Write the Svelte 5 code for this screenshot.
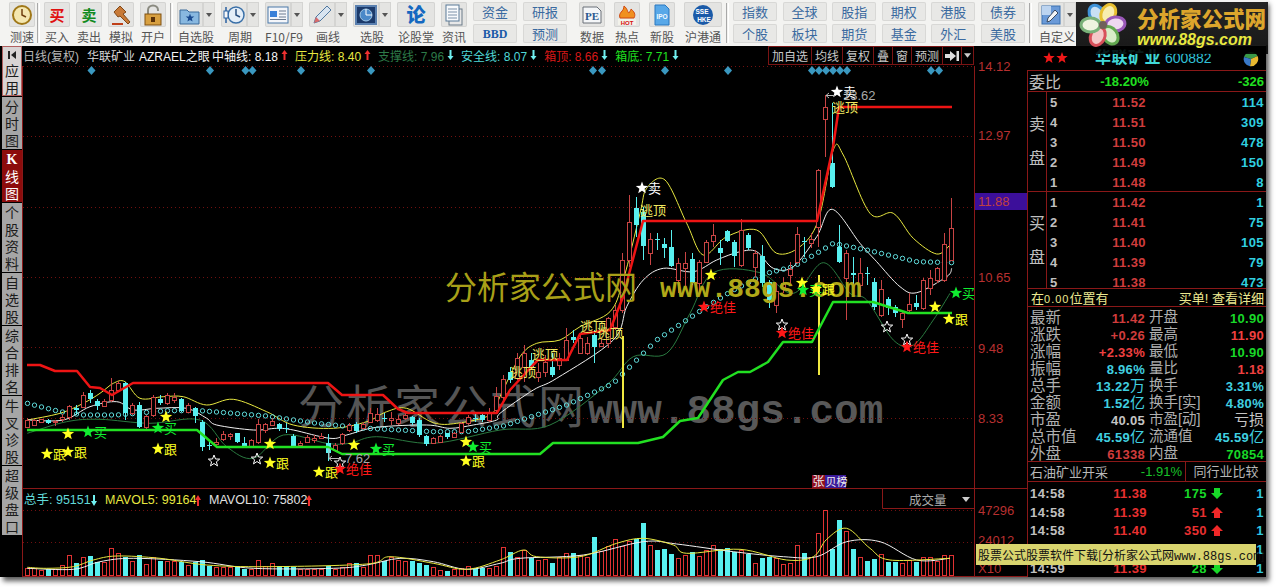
<script>
// coordinates below were read off crops at 3x, z() maps them back to page pixels
const z = (ox, oy, pts) => pts.map(([x, y]) => [ox + x / 3, oy + y / 3]);
const path = (pts) => pts.map((p) => p[0].toFixed(1) + ',' + p[1].toFixed(1)).join(' ');

// catmull-rom through the read points, the indicator lines are curves in the reference
const curve = (pts) => {
	let d = `M${pts[0][0].toFixed(1)} ${pts[0][1].toFixed(1)}`;
	for (let i = 0; i < pts.length - 1; i++) {
		const p0 = pts[i - 1] || pts[i];
		const p1 = pts[i];
		const p2 = pts[i + 1];
		const p3 = pts[i + 2] || p2;
		const c1 = [p1[0] + (p2[0] - p0[0]) / 6, p1[1] + (p2[1] - p0[1]) / 6];
		const c2 = [p2[0] - (p3[0] - p1[0]) / 6, p2[1] - (p3[1] - p1[1]) / 6];
		d += ` C${c1[0].toFixed(1)} ${c1[1].toFixed(1)} ${c2[0].toFixed(1)} ${c2[1].toFixed(1)} ${p2[0].toFixed(1)} ${p2[1].toFixed(1)}`;
	}
	return d;
};

const redLine = [[27, 365], [40, 365], [55, 371], [77, 371], [90, 387], [100, 388], [112, 395], [133, 383], [328, 383], [342, 395], [383, 395], [398, 409], [408, 413], [497, 413], [510, 390], [533, 365], [538, 360], [567, 360], [580, 334], [610, 330], [623, 297], [643, 221], [817, 221], [833, 147], [839, 107], [952, 107]];
const greenLine = [[27, 430], [197, 430], [217, 447], [328, 447], [342, 454], [540, 454], [553, 443], [638, 443], [663, 437], [680, 421], [698, 418], [723, 380], [738, 372], [750, 372], [768, 362], [783, 342], [812, 342], [833, 302], [873, 302], [908, 313], [952, 313]];
const whiteLine = [
	...z(0, 340, [[82, 240], [190, 240], [270, 200], [350, 185], [400, 210], [470, 205], [560, 205], [620, 235], [650, 255], [760, 270], [830, 265], [880, 270], [990, 295], [1040, 285], [1130, 262], [1280, 255], [1350, 265], [1420, 255], [1490, 240]]),
	...z(500, 340, [[0, 220], [100, 150], [170, 115], [340, 0]]),
	...z(500, 80, [[380, 680], [430, 600], [490, 565], [580, 575], [650, 540], [720, 515], [770, 515], [820, 565], [880, 560], [950, 470], [997, 388], [1080, 490], [1130, 545], [1200, 620], [1250, 638], [1340, 590], [1355, 565]])
];
const yellowLine = [
	...z(0, 340, [[82, 240], [180, 220], [250, 190], [300, 160], [340, 130], [375, 125], [420, 175], [490, 170], [550, 170], [620, 195], [700, 178], [800, 215], [880, 255], [1000, 265], [1100, 245], [1160, 215], [1220, 205], [1300, 248], [1370, 250], [1470, 225]]),
	...z(500, 340, [[0, 170], [60, 50], [110, 10]]),
	...z(500, 80, [[180, 780], [240, 740], [330, 695], [370, 600], [420, 400], [440, 325], [495, 300], [560, 430], [610, 525], [680, 470], [770, 450], [830, 520], [900, 500], [955, 420], [1000, 210], [1030, 225], [1110, 400], [1180, 400], [1240, 475], [1310, 522], [1350, 495]])
];
const darkLine = [
	...z(0, 340, [[82, 280], [200, 245], [300, 238], [450, 250], [600, 240], [680, 320], [760, 355], [850, 285], [980, 310], [1050, 310], [1130, 290], [1300, 310]]),
	...z(500, 340, [[0, 270], [150, 255], [320, 135], [400, 50]]),
	...z(500, 80, [[500, 820], [570, 700], [640, 578], [780, 578], [880, 640], [970, 548], [1050, 640], [1100, 660], [1180, 780], [1240, 795], [1300, 720], [1350, 640]])
];
const dotLine = [
	...z(0, 340, [[82, 190], [180, 215], [250, 225], [350, 225], [500, 212], [600, 212], [800, 228], [950, 250], [1100, 265], [1300, 275], [1400, 275]]),
	...z(500, 340, [[10, 258], [200, 195], [340, 130]]),
	...z(500, 80, [[470, 780], [620, 680], [700, 630], [800, 580], [880, 560], [950, 520], [1000, 490], [1100, 510], [1250, 545], [1355, 548]])
];
const volWhite = [
	...z(0, 340, [[82, 685], [220, 688], [300, 665], [400, 655], [600, 665], [760, 685], [1000, 685], [1100, 675], [1200, 655], [1300, 665], [1400, 688]]),
	...z(500, 340, [[0, 670], [60, 655], [250, 645], [430, 605], [530, 612], [700, 635], [850, 650], [950, 650], [1040, 605], [1140, 605], [1250, 660], [1350, 655]])
];
const volYellow = [
	...z(0, 340, [[82, 682], [140, 685], [220, 680], [280, 660], [350, 648], [480, 655], [620, 675], [800, 680], [1100, 672], [1170, 650], [1300, 670], [1400, 688]]),
	...z(500, 340, [[0, 660], [70, 630], [110, 650], [240, 650], [350, 610], [430, 595], [520, 615], [560, 640], [720, 628], [860, 660], [940, 650], [980, 598], [1040, 565], [1110, 625], [1170, 660], [1350, 655]])
];

const lerpY = (pts, x) => {
	for (let i = 1; i < pts.length; i++) {
		if (x <= pts[i][0]) {
			const [a, b] = [pts[i - 1], pts[i]];
			return a[1] + ((b[1] - a[1]) * (x - a[0])) / (b[0] - a[0] || 1);
		}
	}
	return pts[pts.length - 1][1];
};

const cx = (i) => 27.5 + 7 * i;
const dots = Array.from({ length: 133 }, (_, i) => [cx(i), lerpY(dotLine, cx(i))]);

// type, body top, body bottom, wick top, wick bottom
const rowsA = 'r 240 262 235 265|r 240 255 238 258|r 238 245 236 250|c 240 250 238 252|r 243 247 240 258|r 232 238 222 245|r 197 232 195 240|c 205 210 195 225|r 165 200 155 205|c 160 178 150 190|c 182 198 178 210|r 182 197 178 200|r 150 180 115 185|r 130 150 122 155|c 130 218 125 240|r 195 218 190 225|c 195 262 185 265|r 228 262 225 268|r 170 225 165 230|c 178 188 165 195|r 165 190 160 195|r 170 180 158 190|c 178 212 175 215|r 195 215 190 220|c 205 228 200 250|c 245 320 240 332|c 316 318 305 330|r 305 312 295 315|r 282 298 272 302|r 283 288 280 300|c 280 305 278 308|c 308 320 292 322|r 300 318 298 320|r 252 305 238 312|r 252 270 250 280|r 243 255 235 258|c 252 268 250 272|c 263 266 250 280|c 288 318 282 320|r 308 315 302 318|r 292 305 285 310|r 295 300 285 308|r 288 295 280 298|c 310 340 282 362|r 315 330 310 335|r 282 310 278 315|r 255 270 248 275|c 252 272 245 280|r 252 265 245 270|r 218 245 205 250|r 222 240 205 245|c 233 237 220 245|r 235 240 215 255|r 238 250 225 255|r 225 235 215 240|c 232 250 228 255|c 240 285 235 290|c 288 312 285 318|r 295 310 290 312|r 288 305 285 310|c 280 292 278 298|r 280 290 275 295|r 250 275 245 280|r 232 248 225 255|c 233 237 222 245|c 225 240 222 245|r 215 240 205 245|r 168 210 140 215|r 118 170 105 180|c 96 120 80 130|r 55 115 40 120|r 40 82 15 125|c 60 80 40 90|r 95 110 70 125|r 65 95 45 110|c 80 105 40 110|r 55 75 40 90|r 0 60 -35 62|c -10 0 -30 10|r -5 40 -20 42|r 10 40 -10 45|c -15 20 -30 70|r 10 18 -5 20|r -65 10 -70 25|r -90 -40 -105 -30';
const rowsB = 'r 540 690 520 700|r 425 540 345 560|c 385 435 350 470|c 395 497 380 540|r 478 520 460 555|c 476 480 460 510|c 492 505 475 535|c 502 558 450 560|r 550 600 535 640|r 548 565 515 620|c 538 610 518 615|r 545 610 540 640|r 485 545 480 550|r 465 482 432 500|c 505 518 480 555|c 452 482 450 485|c 485 528 480 560|r 450 555 418 560|c 465 505 460 510|r 520 560 510 590|c 528 610 495 620|c 605 660 600 685|r 632 675 610 700|r 610 620 590 640|r 568 585 545 610|r 462 545 440 550|c 483 487 470 530|r 478 490 460 505|r 270 440 268 500|r 82 118 45 230|c 248 322 70 325|c 500 545 435 548|r 520 595 510 720|c 580 584 530 625|r 578 615 535 650|c 578 582 560 615|c 605 680 595 690|r 628 705 600 710|c 658 685 650 705|c 682 700 675 712|r 700 718 695 745|r 672 690 640 695|c 670 682 645 690|r 600 685 595 690|r 595 625 570 645|r 565 600 560 610|r 492 600 460 605|r 445 540 355 542';
const parse = (rows, base) =>
	rows.split('|').map((row) => {
		const [t, ...n] = row.split(' ');
		const [top, bot, hi, lo] = n.map((v) => Math.round(base + Number(v) / 3));
		return { t, top, bot, hi, lo };
	});
const candles = [...parse(rowsA, 340), ...parse(rowsB, 80)];

const volTops = '685 685 690 688 688 675 645 670 652 648 665 665 625 640 650 662 645 672 652 662 662 662 665 675 665 660 678 682 682 680 680 686 688 660 678 670 678 678 682 688 688 688 688 678 688 680 670 670 680 645 645 662 650 660 662 664 668 675 680 690 692 688 685 678 685 685 685 678 620 635 650 630 655 660 658 668 650 638 638 645 650 592 632 618 598 618 602 598 550 615 630 628 642 655 645 635 648 630 615 628 625 637 630 642 668 655 652 655 672 668 615 640 650 580 510 627 540 572 628 652 663 658 643 665 665 670 660 665 650 650 662 645 646'
	.split(' ')
	.map((v) => Math.round(340 + Number(v) / 3));

const diamonds = [91.5, 210, 245.5, 252.5, 301, 371, 593, 602, 665, 728, 812, 819, 826, 833, 840, 847, 931, 939];
const grid = [66, 136, 207, 277, 347, 418, 510, 542];
const axis = [
	['14.12', 71],
	['12.97', 140],
	['10.65', 282],
	['9.48', 353],
	['8.33', 423],
	['47296', 515],
	['24012', 545],
	['X10', 573]
];

const starPts = (x, y, r) => {
	const out = [];
	for (let i = 0; i < 10; i++) {
		const a = (Math.PI / 5) * i - Math.PI / 2;
		const k = i % 2 ? r * 0.42 : r;
		out.push((x + k * Math.cos(a)).toFixed(1) + ',' + (y + k * Math.sin(a)).toFixed(1));
	}
	return out.join(' ');
};

const stars = [
	['#ffff20', 47, 454, '跟'], ['#ffff20', 68, 452, '跟'], ['#ffff20', 158, 449, '跟'], ['#ffff20', 270, 463, '跟'], ['#ffff20', 319, 472, '跟'], ['#ffff20', 466, 461, '跟'],
	['#ffff20', 68, 434], ['#ffff20', 166, 417], ['#ffff20', 270, 444], ['#ffff20', 354, 445], ['#ffff20', 466, 442],
	['#10ee30', 88, 432, '买'], ['#10ee30', 158, 428, '买'], ['#10ee30', 376, 449, '买'], ['#10ee30', 473, 447, '买'],
	['#ffff20', 711, 275], ['#ffff20', 802, 283], ['#10ee30', 803, 290, '买'], ['#ffff20', 816, 289, '跟'], ['#ffff20', 935, 307], ['#ffff20', 949, 319, '跟'], ['#10ee30', 956, 293, '买'],
	['#ff1818', 340, 469, '绝佳'], ['#ff1818', 704, 307, '绝佳'], ['#ff1818', 782, 333, '绝佳'], ['#ff1818', 907, 347, '绝佳'],
	['#ffffff', 642, 188, '卖'], ['#ffffff', 837, 92, '卖']
];
const hollow = [[214, 461], [257, 459], [340, 463], [782, 325], [887, 327], [907, 340]];
const tops = [[640, 215], [832, 112], [580, 331], [597, 338], [510, 377], [532, 359]];

const tabs = [
	{ name: '应用', light: true, skip: true },
	{ name: '分时图' },
	{ name: 'K线图', active: true },
	{ name: '个股资料' },
	{ name: '自选股' },
	{ name: '综合排名' },
	{ name: '牛叉诊股' },
	{ name: '超级盘口' }
];

const sell = [['5', '11.52', '114'], ['4', '11.51', '309'], ['3', '11.50', '478'], ['2', '11.49', '150'], ['1', '11.48', '8']];
const buy = [['1', '11.42', '1'], ['2', '11.41', '75'], ['3', '11.40', '105'], ['4', '11.39', '79'], ['5', '11.38', '473']];

const stats = [
	['最新', '11.42', 'red', '开盘', '10.90', 'green'],
	['涨跌', '+0.26', 'red', '最高', '11.90', 'hot'],
	['涨幅', '+2.33%', 'hot', '最低', '10.90', 'green'],
	['振幅', '8.96%', 'cyan', '量比', '1.18', 'hot'],
	['总手', '13.22万', 'cyan', '换手', '3.31%', 'cyan'],
	['金额', '1.52亿', 'cyan', '换手[实]', '4.80%', 'cyan'],
	['市盈', '40.05', 'grey', '市盈[动]', '亏损', 'grey'],
	['总市值', '45.59亿', 'cyan', '流通值', '45.59亿', 'cyan'],
	['外盘', '61338', 'red', '内盘', '70854', 'green']
];
// digits are bold, a trailing unit is thin
const num = (v) => v.replace(/[万亿亏损]+$/, '');
const unit = (v) => v.slice(num(v).length);

const ticks = [
	['14:58', '11.38', '175', 'down', '1'],
	['14:58', '11.39', '51', 'up', '1'],
	['14:58', '11.40', '350', 'up', '1'],
	['14:59', '11.40', '54', 'down', '1'],
	['14:59', '11.39', '28', 'down', '1']
];

const small1 = [['资金', 'BBD'], ['研报', '预测']];
const small2 = [['指数', '个股'], ['全球', '板块'], ['股指', '期货'], ['期权', '基金'], ['港股', '外汇'], ['债券', '美股']];
const petals = [
	['#3f93d8', '#c8e0f4', -30], ['#e8c030', '#f8eeb0', 25], ['#9a58b8', '#eed8f0', 85], ['#62a850', '#d8ecc8', 145], ['#d8505a', '#f4c8c8', 205], ['#78b078', '#eef4e0', 270]
];
</script>

{#snippet arrow(color, up)}
	<svg class="arr" width="7" height="12" viewBox="0 0 7 12">
		{#if up}
			<path d="M3.5 1 L6.5 5 H4.5 V11 H2.5 V5 H0.5 Z" fill={color} />
		{:else}
			<path d="M3.5 11 L6.5 7 H4.5 V1 H2.5 V7 H0.5 Z" fill={color} />
		{/if}
	</svg>
{/snippet}

{#snippet tool(label, kind, split = false, wide = false)}
	<div class="tool" class:split class:wide>
		<div class="ibox">
			<svg width="22" height="22" viewBox="0 0 22 22">
				{#if kind === 'clock'}
					<circle cx="11" cy="11" r="9" fill="#f4e7b0" stroke="#a07818" stroke-width="2" />
					<path d="M11 5 V11 L15 13" fill="none" stroke="#704010" stroke-width="1.5" />
				{:else if kind === 'buy'}
					<text x="11" y="17" class="ichar" fill="#e01010">买</text>
				{:else if kind === 'sell'}
					<text x="11" y="17" class="ichar" fill="#108a20">卖</text>
				{:else if kind === 'hammer'}
					<path d="M4 8 L10 2 L16 8 L13 10 L20 18 L18 20 L10 12 L8 13 Z" fill="#c87a38" stroke="#804818" />
					<path d="M2 20 H13" stroke="#c04018" stroke-width="2" />
				{:else if kind === 'lock'}
					<path d="M6 10 V6 A5 4.5 0 0 1 16 6 V7" fill="none" stroke="#8a8a80" stroke-width="2" />
					<rect x="3" y="10" width="16" height="11" fill="#d8a040" stroke="#805010" />
					<rect x="9" y="13" width="4" height="5" fill="#5a3008" />
				{:else if kind === 'folder'}
					<path d="M1 6 H8 L10 8 H20 V20 H1 Z" fill="#88b8e0" stroke="#3a6a9a" />
					<polygon points={starPts(11, 14, 4.5)} fill="#1a4a90" />
				{:else if kind === 'period'}
					<circle cx="13" cy="11" r="8" fill="#e4eef8" stroke="#3a70a8" stroke-width="1.5" />
					<path d="M13 5 V11 L17 13" fill="none" stroke="#2a5080" stroke-width="1.5" />
					<path d="M3 3 V19" stroke="#2a60a0" stroke-width="1.5" />
					<rect x="1" y="7" width="4" height="7" fill="#f8f8f8" stroke="#2a60a0" />
				{:else if kind === 'f10'}
					<rect x="1" y="3" width="20" height="16" fill="#f4f6fa" stroke="#4a78a8" />
					<rect x="3" y="7" width="7" height="6" fill="#3a80d8" />
					<path d="M12 7 H19 M12 10 H19 M12 13 H19 M3 15.5 H19" stroke="#6a7a90" />
				{:else if kind === 'pen'}
					<path d="M3 19 L5 13 L16 2 L20 6 L9 17 Z" fill="#d8e4f0" stroke="#5078a0" />
					<path d="M3 19 L5 13 L9 17 Z" fill="#d86a6a" />
				{:else if kind === 'radar'}
					<rect x="1" y="2" width="20" height="18" fill="#1c3a6a" stroke="#5a80b0" stroke-width="2" />
					<circle cx="11" cy="11" r="6" fill="#4a88c8" stroke="#a0c8e8" />
					<path d="M11 11 V5 M11 11 H17" stroke="#fff" />
				{:else if kind === 'lun'}
					<text x="11" y="18" class="ichar big" fill="#1468c0">论</text>
				{:else if kind === 'doc'}
					<rect x="6" y="5" width="13" height="16" fill="#e8e8e8" stroke="#6a7a88" />
					<rect x="3" y="1" width="13" height="16" fill="#f8fafc" stroke="#5a7a98" />
					<path d="M5 5 H14 M5 8 H14 M5 11 H14 M5 14 H14" stroke="#7a90a8" />
				{:else if kind === 'pe'}
					<path d="M2 3 H16 L20 7 V19 H2 Z" fill="#f4f6f8" stroke="#6a7078" />
					<text x="11" y="16" class="ichar pe" fill="#2a5a90">PE</text>
				{:else if kind === 'hot'}
					<path d="M4 14 C2 8 8 8 8 2 C12 5 11 8 13 9 C14 7 15 6 15 5 C20 9 19 12 18 14 Z" fill="#f09020" stroke="#d04810" />
					<rect x="2" y="15" width="18" height="6" fill="#f2f2ea" />
					<text x="11" y="20.5" class="ichar hotx" fill="#d81010">HOT</text>
				{:else if kind === 'ipo'}
					<path d="M4 1 H14 L18 5 V21 H4 Z" fill="#58a8e8" stroke="#2a78c0" />
					<text x="11" y="15" class="ichar ipo" fill="#f4faff">IPO</text>
				{:else if kind === 'hk'}
					<circle cx="11" cy="11" r="10" fill="#1a5aa8" />
					<text x="10" y="9.5" class="ichar ipo" fill="#fff">SSE</text>
					<text x="12" y="17.5" class="ichar ipo" fill="#fff">HKE</text>
				{:else if kind === 'custom'}
					<rect x="2" y="2" width="18" height="18" fill="#6a9ad8" stroke="#3a70b0" />
					<path d="M2 11 H11 V2 H2 Z" fill="#bcd4f0" />
					<path d="M7 18 L8 14 L15 6 L18 9 L10 17 Z" fill="#f4f6f8" stroke="#3a4a60" />
				{/if}
			</svg>
		</div>
		{#if split}<div class="drop"><i></i></div>{/if}
		<span class="lab">{label}</span>
	</div>
{/snippet}

{#snippet vol(rows, word)}
	<div class="book">
		<div class="side"><span>{word[0]}</span><span>{word[1]}</span></div>
		<div class="bookrows">
			{#each rows as r}
				<div class="brow"><span class="n">{r[0]}</span><span class="p">{r[1]}</span><span class="v">{r[2]}</span></div>
			{/each}
		</div>
	</div>
{/snippet}

<div class="win">
	<header class="bar">
		<div class="grp first">{@render tool('测速', 'clock')}</div>
		<div class="sep"></div>
		<div class="grp">
			{@render tool('买入', 'buy')}
			{@render tool('卖出', 'sell')}
			{@render tool('模拟', 'hammer')}
			{@render tool('开户', 'lock')}
		</div>
		<div class="sep"></div>
		<div class="grp">
			{@render tool('自选股', 'folder', true)}
			{@render tool('周期', 'period', true)}
			{@render tool('F10/F9', 'f10', true)}
			{@render tool('画线', 'pen', true)}
			{@render tool('选股', 'radar', true)}
			{@render tool('论股堂', 'lun', false, true)}
			{@render tool('资讯', 'doc')}
		</div>
		<div class="smalls gl">
			{#each small1 as pair}
				<div class="pair">
					{#each pair as s}
						<div class="sbtn" class:bbd={s === 'BBD'}>{s}</div>
					{/each}
				</div>
			{/each}
		</div>
		<div class="grp data">
			{@render tool('数据', 'pe')}
			{@render tool('热点', 'hot')}
			{@render tool('新股', 'ipo')}
			{@render tool('沪港通', 'hk', false, true)}
		</div>
		<div class="sep"></div>
		<div class="smalls fine">
			{#each small2 as pair}
				<div class="pair">
					{#each pair as s}
						<div class="sbtn">{s}</div>
					{/each}
				</div>
			{/each}
		</div>
		<div class="sep"></div>
		<div class="grp last">{@render tool('自定义', 'custom', true)}</div>
	</header>

	<div class="main">
		<nav class="tabs">
			{#each tabs as t}
				<div class="tab" class:light={t.light} class:active={t.active}>
					{#if t.skip}
						<svg class="skip" width="10" height="12" viewBox="0 0 10 12"><path d="M1 2 H3 V10 H1 Z M9 2 V10 L4 6 Z" fill="#222" /></svg>
					{/if}
					{#each [...t.name] as ch}<span class:kay={ch === 'K'}>{ch}</span>{/each}
				</div>
			{/each}
		</nav>

		<section class="chart">
			<div class="legend">
				<div class="lg">
					<span class="dim w64">日线(复权)</span>
					<span class="soft w52">华联矿业</span>
					<span class="wh w73">AZRAEL之眼</span>
					<span class="wh">中轴线: 8.18</span>{@render arrow('#f03030', true)}
					<span class="ye gap">压力线: 8.40</span>{@render arrow('#f03030', true)}
					<span class="dg gap">支撑线: 7.96</span>{@render arrow('#70f0f0', false)}
					<span class="cy gap">安全线: 8.07</span>{@render arrow('#70f0f0', false)}
					<span class="rd gap">箱顶: 8.66</span>{@render arrow('#70f0f0', false)}
					<span class="gr gap">箱底: 7.71</span>{@render arrow('#70f0f0', false)}
				</div>
				<div class="btns">
					<span class="cbtn">加自选</span><span class="cbtn">均线</span><span class="cbtn">复权</span><span class="cbtn">叠</span><span class="cbtn">窗</span><span class="cbtn">预测</span>
					<span class="cbtn ic"><svg width="14" height="10" viewBox="0 0 14 10"><path d="M0 3 H5 V0 L11 5 L5 10 V7 H0 Z M11.5 0 H14 V10 H11.5 Z" fill="#ddd" /></svg></span>
					<span class="cbtn dd"><svg width="8" height="5" viewBox="0 0 8 5"><path d="M0 0 H8 L4 5 Z" fill="#ccc" /></svg></span>
				</div>
			</div>

			<svg class="plot" width="1005" height="511" viewBox="22 66 1005 511">
				<text x="298" y="423" class="wm-cjk">分析家公式网</text>
				<text x="588" y="423" class="wm-url">www.88gs.com</text>

				{#each grid as y}
					<line x1="23" x2="974" y1={y + 0.5} y2={y + 0.5} class="grid" />
				{/each}
				<line x1="22.5" x2="22.5" y1="66" y2="577" class="frame" />
				<line x1="974.5" x2="974.5" y1="66" y2="577" class="frame" />
				<line x1="22" x2="1027" y1="488.5" y2="488.5" class="frame" />
				<line x1="22" x2="1027" y1="576.5" y2="576.5" class="frame" />
				<path d="M882.5 489 V508.5 H974" class="frame" fill="none" />

				{#each diamonds as x}
					<path d="M{x} 66 L{x + 4} 70.5 L{x} 75 L{x - 4} 70.5 Z" fill="#3a98c0" />
				{/each}

				<path d={curve(yellowLine)} class="ln" stroke="#e8e840" />
				<path d={curve(whiteLine)} class="ln" stroke="#f0f0f0" />
				<path d={curve(darkLine)} class="ln" stroke="#2a7a40" />
				{#each dots as d}
					<circle cx={d[0]} cy={d[1]} r="2.2" class="dot" />
				{/each}

				<g shape-rendering="crispEdges">
					<line x1="622.5" x2="622.5" y1="336" y2="428" stroke="#f0e840" stroke-width="2" />
					<line x1="818.5" x2="818.5" y1="275" y2="375" stroke="#f0e840" stroke-width="2" />
					{#each candles as c, i}
						{#if c.t === 'r'}
							<line x1={cx(i)} x2={cx(i)} y1={c.hi} y2={c.top} class="wr" />
							<line x1={cx(i)} x2={cx(i)} y1={c.bot} y2={c.lo} class="wr" />
							<rect x={cx(i) - 2} y={c.top + 0.5} width="4" height={c.bot - c.top} class="cr" />
						{:else}
							<line x1={cx(i)} x2={cx(i)} y1={c.hi} y2={c.lo} class="wc" />
							<rect x={cx(i) - 2.5} y={c.top} width="5" height={c.bot - c.top} class="cc" />
						{/if}
					{/each}
				</g>

				<polyline points={path(redLine)} class="thick" stroke="#ee1414" />
				<polyline points={path(greenLine)} class="thick" stroke="#22e022" />

				<text x="445" y="299" class="wy-cjk">分析家公式网</text>
				<text x="660" y="297" class="wy-url">www.88gs.com</text>

				{#each tops as t}
					<text x={t[0]} y={t[1]} class="tag ty">逃顶</text>
				{/each}
				{#each hollow as h}
					<polygon points={starPts(h[0], h[1], 6)} fill="none" stroke="#fff" />
				{/each}
				{#each stars as s}
					<polygon points={starPts(s[1], s[2], 6.5)} fill={s[0]} />
					{#if s[3]}
						<text x={s[1] + 6} y={s[2] + 5} class="tag" fill={s[0]}>{s[3]}</text>
					{/if}
				{/each}

				<text x="843" y="100" class="px">13.62</text>
				<path d="M826 95.5 H835 M826 95.5 L829 93 M826 95.5 L829 98" stroke="#bbb" fill="none" />
				<text x="345" y="463" class="px">7.62</text>
				<path d="M329 458.5 H341 M329 458.5 L332 456 M329 458.5 L332 461 M329 448 V458" stroke="#bbb" fill="none" />

				<rect x="812" y="475" width="13" height="13" fill="#901020" />
				<rect x="825" y="475" width="21" height="13" fill="#3a1a9a" />
				<text x="812.5" y="486" class="tag wh2">张</text>
				<text x="825.5" y="486" class="tag wh2 narrow">贝榜</text>

				{#each volTops as y, i}
					{#if candles[i].t === 'r'}
						<rect x={cx(i) - 2} y={y + 0.5} width="4" height={575 - y} class="vr" shape-rendering="crispEdges" />
					{:else}
						<rect x={cx(i) - 2.5} y={y} width="5" height={576 - y} class="vc" shape-rendering="crispEdges" />
					{/if}
				{/each}
				<path d={curve(volWhite)} class="ln" stroke="#f0f0f0" />
				<path d={curve(volYellow)} class="ln" stroke="#e8e840" />

				<text x="24" y="504" class="leg" fill="#60d8d8">总手: 95151</text>
				<path d="M94 506 L97 501 H95 V495 H93 V501 H91 Z" fill="#70f0f0" />
				<text x="105" y="504" class="leg" fill="#e8e840">MAVOL5: 99164</text>
				<path d="M198 495 L201 500 H199 V506 H197 V500 H195 Z" fill="#f03030" />
				<text x="209" y="504" class="leg" fill="#e0e0e0">MAVOL10: 75802</text>
				<path d="M309 495 L312 500 H310 V506 H308 V500 H306 Z" fill="#f03030" />
				<text x="909" y="505" class="leg" fill="#aaa">成交量</text>
				<path d="M962 497 H970 L966 502 Z" fill="#ccc" />

				{#each axis as a}
					<text x="978" y={a[1]} class="ax">{a[0]}</text>
				{/each}
				<rect x="975" y="193" width="52" height="17" fill="#3c0f9a" />
				<text x="978" y="206" class="ax hl">11.88</text>
			</svg>
		</section>

		<aside class="panel">
			<div class="phead">
				<div class="rstars">
					<svg width="26" height="12" viewBox="0 0 26 12">
						<polygon points={starPts(6, 6, 6)} fill="#f01818" />
						<polygon points={starPts(19, 6, 6)} fill="#f01818" />
					</svg>
				</div>
				<div class="ptitle"><b>华联矿业</b> <span>600882</span></div>
				<svg class="pie" width="16" height="16" viewBox="0 0 16 16">
					<path d="M8 8 L1 6 A7.3 7.3 0 0 1 14.5 5 Z" fill="#3a9a48" />
					<path d="M8 8 L14.5 5 A7.3 7.3 0 0 1 7 15.3 Z" fill="#e8b830" />
					<path d="M8 8 L7 15.3 A7.3 7.3 0 0 1 1 6 Z" fill="#3878c8" />
				</svg>
			</div>
			<div class="wb">
				<span class="big">委比</span><span class="gn mid">-18.20%</span><span class="gn">-326</span>
			</div>
			{@render vol(sell, '卖盘')}
			{@render vol(buy, '买盘')}
			<div class="notice"><span>在<em>0.00</em>位置有</span><span>买单! 查看详细</span></div>
			<div class="stats">
				{#each stats as s}
					<div class="srow">
						<span class="sl">{s[0]}</span><span class="sv {s[2]}">{num(s[1])}<small>{unit(s[1])}</small></span><span class="sl">{s[3]}</span><span class="sv {s[5]}">{num(s[4])}<small>{unit(s[4])}</small></span>
					</div>
				{/each}
			</div>
			<div class="ind">
				<div class="il"><span>石油矿业开采</span><span class="ip">-1.91%</span></div>
				<div class="ir">同行业比较</div>
			</div>
			<div class="ticks">
				{#each ticks as t}
					<div class="trow">
						<span class="tt">{t[0]}</span>
						<span class="tp">{t[1]}</span>
						<span class="tv" class:up={t[3] === 'up'}>{t[2]}</span>
						<svg class="tarr" width="12" height="11" viewBox="0 0 12 11">
							{#if t[3] === 'up'}
								<path d="M6 0 L12 6 H9 V11 H3 V6 H0 Z" fill="#f02828" />
							{:else}
								<path d="M6 11 L12 5 H9 V0 H3 V5 H0 Z" fill="#18d828" />
							{/if}
						</svg>
						<span class="tn">{t[4]}</span>
					</div>
				{/each}
			</div>
		</aside>
	</div>

	<div class="logo">
		<svg width="56" height="46" viewBox="-28 -23 56 46">
			{#each petals as p}
				<ellipse cx="0" cy="-12.5" rx="7" ry="9.5" fill={p[1]} stroke={p[0]} stroke-width="3" transform="rotate({p[2]})" />
			{/each}
			<circle r="4" fill="#70605a" />
		</svg>
		<div class="ltext">
			<div class="l1">分析家公式网</div>
			<div class="l2">www.88gs.com</div>
		</div>
	</div>

	<div class="tip">股票公式股票软件下载[分析家公式网<span>www.88gs.com</span>]</div>
</div>

<style>
:global(body) {
	margin: 0;
	background: #fff;
	min-width: 1278px;
	min-height: 587px;
}
.win {
	position: relative;
	width: 1266px;
	height: 577px;
	box-shadow: 3px 4px 5px rgba(0, 0, 0, 0.65);
	font-family: 'Noto Sans CJK SC', sans-serif;
	background: #000;
}
.bar {
	display: flex;
	height: 46px;
	box-sizing: border-box;
	padding: 2px 0 0 9px;
	background: #f3f3f1;
	overflow: hidden;
}
.grp {
	display: flex;
	gap: 6px;
}
.first {
	width: 24px;
}
.grp.data {
	gap: 9px;
	margin-left: 12px;
}
.grp.last {
	margin-left: 2px;
}
.sep {
	width: 3px;
	height: 40px;
	margin: 1px 4px 0;
	flex: none;
	border-left: 1px solid #a8a8a8;
	border-right: 1px solid #fff;
	box-sizing: border-box;
}
.tool {
	position: relative;
	display: flex;
	flex: none;
	flex-wrap: wrap;
	align-content: flex-start;
	justify-content: center;
	width: 26px;
	height: 43px;
}
.tool.split {
	width: 38px;
	flex-wrap: nowrap;
}
.tool.wide {
	width: 38px;
}
.ibox {
	display: flex;
	align-items: center;
	justify-content: center;
	width: 26px;
	height: 25px;
	background: #e4e4e2;
	border-radius: 2px;
	box-shadow: inset 0 0 0 1px #d4d4d2;
}
.tool.wide .ibox {
	width: 38px;
}
.tool.split .ibox {
	border-radius: 2px 0 0 2px;
	flex: none;
}
.drop {
	display: flex;
	align-items: center;
	justify-content: center;
	width: 12px;
	height: 25px;
	background: #e4e4e2;
	box-shadow: inset 0 0 0 1px #d4d4d2;
}
.drop i {
	border: 3.5px solid transparent;
	border-top: 4px solid #555;
	border-bottom: 0;
}
.lab {
	position: absolute;
	left: -6px;
	right: -6px;
	top: 26px;
	text-align: center;
	font-size: 12px;
	line-height: 17px;
	color: #555;
	white-space: nowrap;
}
.ichar {
	font-family: 'Noto Sans CJK SC', sans-serif;
	font-size: 15px;
	font-weight: 700;
	text-anchor: middle;
}
.ichar.big {
	font-size: 19px;
	font-weight: 900;
}
.ichar.pe {
	font-family: 'Liberation Serif', serif;
	font-size: 11px;
}
.ichar.hotx {
	font-family: 'Liberation Sans', sans-serif;
	font-size: 6px;
}
.ichar.ipo {
	font-family: 'Liberation Sans', sans-serif;
	font-size: 6.5px;
}
.smalls {
	display: flex;
	gap: 6px;
}
.smalls.fine {
	gap: 5.6px;
}
.smalls.gl {
	margin-left: 6px;
}
.pair {
	display: flex;
	flex-direction: column;
	gap: 3px;
}
.sbtn {
	width: 44px;
	height: 19px;
	box-sizing: border-box;
	display: flex;
	align-items: center;
	justify-content: center;
	background: #e8e8e6;
	border-radius: 2px;
	box-shadow: inset 0 0 0 1px #d8d8d6;
	color: #3a6aa0;
	font-size: 13px;
	line-height: 1;
}
.sbtn.bbd {
	font-family: 'Liberation Serif', serif;
	font-weight: 700;
	color: #1a5aa8;
	font-size: 12px;
}

.main {
	display: flex;
	height: 531px;
}
.tabs {
	display: flex;
	flex-direction: column;
	width: 22px;
	flex: none;
	padding-left: 2px;
	box-sizing: border-box;
	background: #000;
}
.tab {
	display: flex;
	flex-direction: column;
	align-items: center;
	padding: 1px 0 0;
	border-bottom: 1px solid #000;
	background: #a6a6a6;
	color: #1c1c1c;
	font-size: 14px;
	line-height: 17px;
}
.tab span {
	height: 17px;
}
.tab .kay {
	font-family: 'Liberation Serif', serif;
	font-weight: 700;
}
.tab.light {
	background: #d8d4d4;
	box-shadow: inset 0 0 0 1px #b06060;
	height: 51px;
	box-sizing: border-box;
}
.tab.active {
	background: #8c0c0c;
	color: #fff;
}
.skip {
	margin: 2px 0 1px;
}
.chart {
	width: 1005px;
	flex: none;
	background: #000;
	display: flex;
	flex-direction: column;
}
.legend {
	display: flex;
	justify-content: space-between;
	height: 20px;
	flex: none;
	font-size: 12px;
	width: 952px;
	overflow: hidden;
}
.lg {
	display: flex;
	align-items: center;
	padding-left: 1px;
	height: 18px;
	white-space: nowrap;
	font-family: 'Liberation Sans', 'Noto Sans CJK SC', sans-serif;
}
.arr {
	margin-left: 3px;
	flex: none;
}
.gap {
	margin-left: 7px;
}
.dim {
	color: #b8b8b8;
}
.soft {
	color: #d8d8d8;
}
.wh {
	color: #f4f4f4;
}
.ye {
	color: #e8e840;
}
.dg {
	color: #2d7a48;
}
.cy {
	color: #50d8d8;
}
.rd {
	color: #d81818;
}
.gr {
	color: #20e020;
}
.w64 {
	width: 64px;
}
.w52 {
	width: 52px;
}
.w73 {
	width: 73px;
}
.btns {
	display: flex;
	height: 19px;
}
.cbtn {
	display: flex;
	align-items: center;
	justify-content: center;
	padding: 0 4px;
	min-width: 12px;
	color: #c8c8c8;
	font-size: 12px;
	box-shadow: inset 0 0 0 1px #7a1414;
	margin-right: -1px;
}
.cbtn.ic {
	width: 14px;
	padding: 0 3px;
}
.cbtn.dd {
	width: 7px;
	min-width: 7px;
	padding: 0 3px;
	margin-right: 0;
}
.plot {
	display: block;
	flex: none;
	overflow: visible;
}
.grid {
	stroke: #701010;
	stroke-dasharray: 1 3;
}
.frame {
	stroke: #8a1818;
}
.ln {
	fill: none;
	stroke-width: 1;
}
.thick {
	fill: none;
	stroke-width: 2.5;
	stroke-linejoin: round;
}
.dot {
	fill: none;
	stroke: #60dcdc;
	stroke-width: 1;
}
.wr {
	stroke: #c84444;
}
.wc {
	stroke: #58f0f0;
}
.cr {
	fill: #000;
	stroke: #c84444;
}
.cc {
	fill: #58f0f0;
}
.vr {
	fill: #000;
	stroke: #e03232;
}
.vc {
	fill: #58f0f0;
}
.tag {
	font-size: 13px;
	font-family: 'Noto Sans CJK SC', sans-serif;
}
.ty {
	fill: #f0e860;
}
.wh2 {
	fill: #eee;
	font-size: 12px;
}
.narrow {
	font-size: 11px;
}
.wm-cjk {
	font-size: 46px;
	letter-spacing: 2px;
	fill: #555;
	font-family: 'Noto Sans CJK SC', sans-serif;
}
.wm-url {
	font-size: 41px;
	font-weight: 700;
	fill: #585858;
	font-family: 'Liberation Mono', monospace;
}
.wy-cjk {
	font-size: 32px;
	fill: #a8a018;
	font-family: 'Noto Sans CJK SC', sans-serif;
}
.wy-url {
	font-size: 28px;
	font-weight: 700;
	fill: #b0a818;
	font-family: 'Liberation Mono', monospace;
}
.px {
	font-size: 13px;
	fill: #a8a8a8;
	font-family: 'Liberation Sans', sans-serif;
}
.leg {
	font-size: 12.5px;
	font-family: 'Liberation Sans', 'Noto Sans CJK SC', sans-serif;
}
.ax {
	font-size: 13px;
	fill: #b83030;
	font-family: 'Liberation Sans', sans-serif;
}
.ax.hl {
	fill: #c04040;
}

.panel {
	width: 239px;
	flex: none;
	box-sizing: border-box;
	height: 531px;
	background: #000;
	color: #b8b8b8;
	font-family: 'Liberation Sans', 'Noto Sans CJK SC', sans-serif;
	overflow: hidden;
}
.phead {
	display: flex;
	align-items: center;
	height: 24px;
	padding-right: 7px;
}
.rstars {
	width: 68px;
	padding-left: 16px;
	box-sizing: border-box;
	display: flex;
}
.ptitle {
	flex: 1;
	color: #30c0d8;
	font-size: 14px;
	line-height: 24px;
	white-space: nowrap;
}
.ptitle b {
	font-size: 16px;
	color: #40d8d8;
	letter-spacing: 0.5px;
}
.pie {
	margin-top: 2px;
}
.wb {
	display: flex;
	align-items: center;
	justify-content: space-between;
	height: 22px;
	padding: 0 2px 0 1px;
	border: solid #8a1818;
	border-width: 1px 0 1px 1px;
	font-size: 13px;
	font-weight: 700;
	box-sizing: border-box;
}
.big {
	font-weight: 400;
	font-size: 16px;
	color: #c0c0c0;
}
.gn {
	color: #20e020;
}
.mid {
	margin-right: 50px;
}
.book {
	display: flex;
	border: solid #8a1818;
	border-width: 0 0 1px 1px;
	box-sizing: border-box;
	height: 100px;
	overflow: hidden;
}
.book + .book {
	height: 97px;
}
.side {
	width: 18px;
	flex: none;
	display: flex;
	flex-direction: column;
	align-items: center;
	justify-content: center;
	gap: 17px;
	border-right: 1px solid #8a1818;
	font-size: 16px;
	line-height: 17px;
	color: #c0c0c0;
}
.bookrows {
	flex: 1;
}
.brow {
	display: flex;
	align-items: center;
	height: 20px;
	padding: 0 2px 0 3px;
	font-size: 13px;
	font-weight: 700;
	letter-spacing: 0.4px;
}
.n {
	width: 10px;
	color: #c0c0c0;
}
.p {
	width: 86px;
	text-align: right;
	color: #d03c3c;
}
.v {
	flex: 1;
	text-align: right;
	color: #30d0e0;
}
.notice {
	display: flex;
	justify-content: space-between;
	align-items: center;
	height: 17px;
	padding: 0 2px 0 3px;
	font-size: 13px;
	color: #ece890;
	border-left: 1px solid #8a1818;
	border-bottom: 1px solid #8a1818;
	box-sizing: content-box;
}
.notice em {
	font-style: normal;
	font-size: 11px;
	letter-spacing: 1px;
}
.stats {
	border-left: 1px solid #8a1818;
	padding: 2px 2px 0 2px;
	height: 155px;
	box-sizing: border-box;
	border-bottom: 1px solid #8a1818;
}
.srow {
	display: grid;
	grid-template-columns: 50px 65px 55px 1fr;
	height: 17px;
	line-height: 17px;
	white-space: nowrap;
}
.sl {
	font-size: 15.5px;
	color: #b0b0b0;
}
.sl:nth-child(3) {
	padding-left: 4px;
	font-size: 14.5px;
}
.sv {
	text-align: right;
	font-size: 13px;
	font-weight: 700;
	letter-spacing: 0.3px;
}
.sv small {
	font-size: 15px;
	font-weight: 400;
	letter-spacing: 0;
}
.sv.red {
	color: #d03c3c;
}
.sv.hot {
	color: #f04040;
}
.sv.green {
	color: #18d828;
}
.sv.cyan {
	color: #40d0e0;
}
.sv.grey {
	color: #c4c4c4;
}
.ind {
	display: flex;
	height: 20px;
	border-left: 1px solid #8a1818;
	border-bottom: 1px solid #8a1818;
	box-sizing: border-box;
	font-size: 13px;
}
.il {
	display: flex;
	justify-content: space-between;
	align-items: center;
	width: 158px;
	padding: 0 3px 0 2px;
	box-sizing: border-box;
	border-right: 1px solid #8a1818;
}
.ip {
	color: #18c028;
}
.ir {
	flex: 1;
	text-align: center;
	line-height: 20px;
}
.ticks {
	padding: 2px 2px 0 2px;
	border-left: 1px solid #8a1818;
}
.trow {
	display: flex;
	align-items: center;
	height: 18.8px;
	font-size: 13px;
	font-weight: 700;
	letter-spacing: 0.4px;
}
.tt {
	width: 46px;
	color: #c0c0c0;
}
.tp {
	width: 71px;
	text-align: right;
	color: #e83030;
}
.tv {
	width: 60px;
	text-align: right;
	color: #18d828;
}
.tv.up {
	color: #e83030;
}
.tarr {
	margin: 0 0 0 4px;
}
.tn {
	flex: 1;
	text-align: right;
	color: #30c8e0;
}
.logo {
	position: absolute;
	left: 1076px;
	top: 2px;
	width: 192px;
	height: 52px;
	display: flex;
	background: linear-gradient(#242424 0, #1a1a1a 43px, rgba(0, 0, 0, 0.88) 44px);
	overflow: hidden;
}
.logo svg {
	flex: none;
	margin-left: -1px;
}
.ltext {
	margin-left: 6px;
	padding-top: 3px;
}
.l1 {
	font-size: 21.5px;
	line-height: 26px;
	font-weight: 900;
	color: #dca52c;
	white-space: nowrap;
}
.l2 {
	font-family: 'Liberation Sans', sans-serif;
	font-size: 16px;
	line-height: 18px;
	font-weight: 700;
	font-style: italic;
	color: #e8e840;
}
.tip {
	position: absolute;
	left: 976px;
	top: 544px;
	width: 280px;
	height: 21px;
	box-sizing: border-box;
	padding-left: 2px;
	background: #d8d46e;
	color: #111;
	font-size: 12px;
	line-height: 21px;
	white-space: nowrap;
}
.tip span {
	font-family: 'Liberation Mono', monospace;
}
</style>
